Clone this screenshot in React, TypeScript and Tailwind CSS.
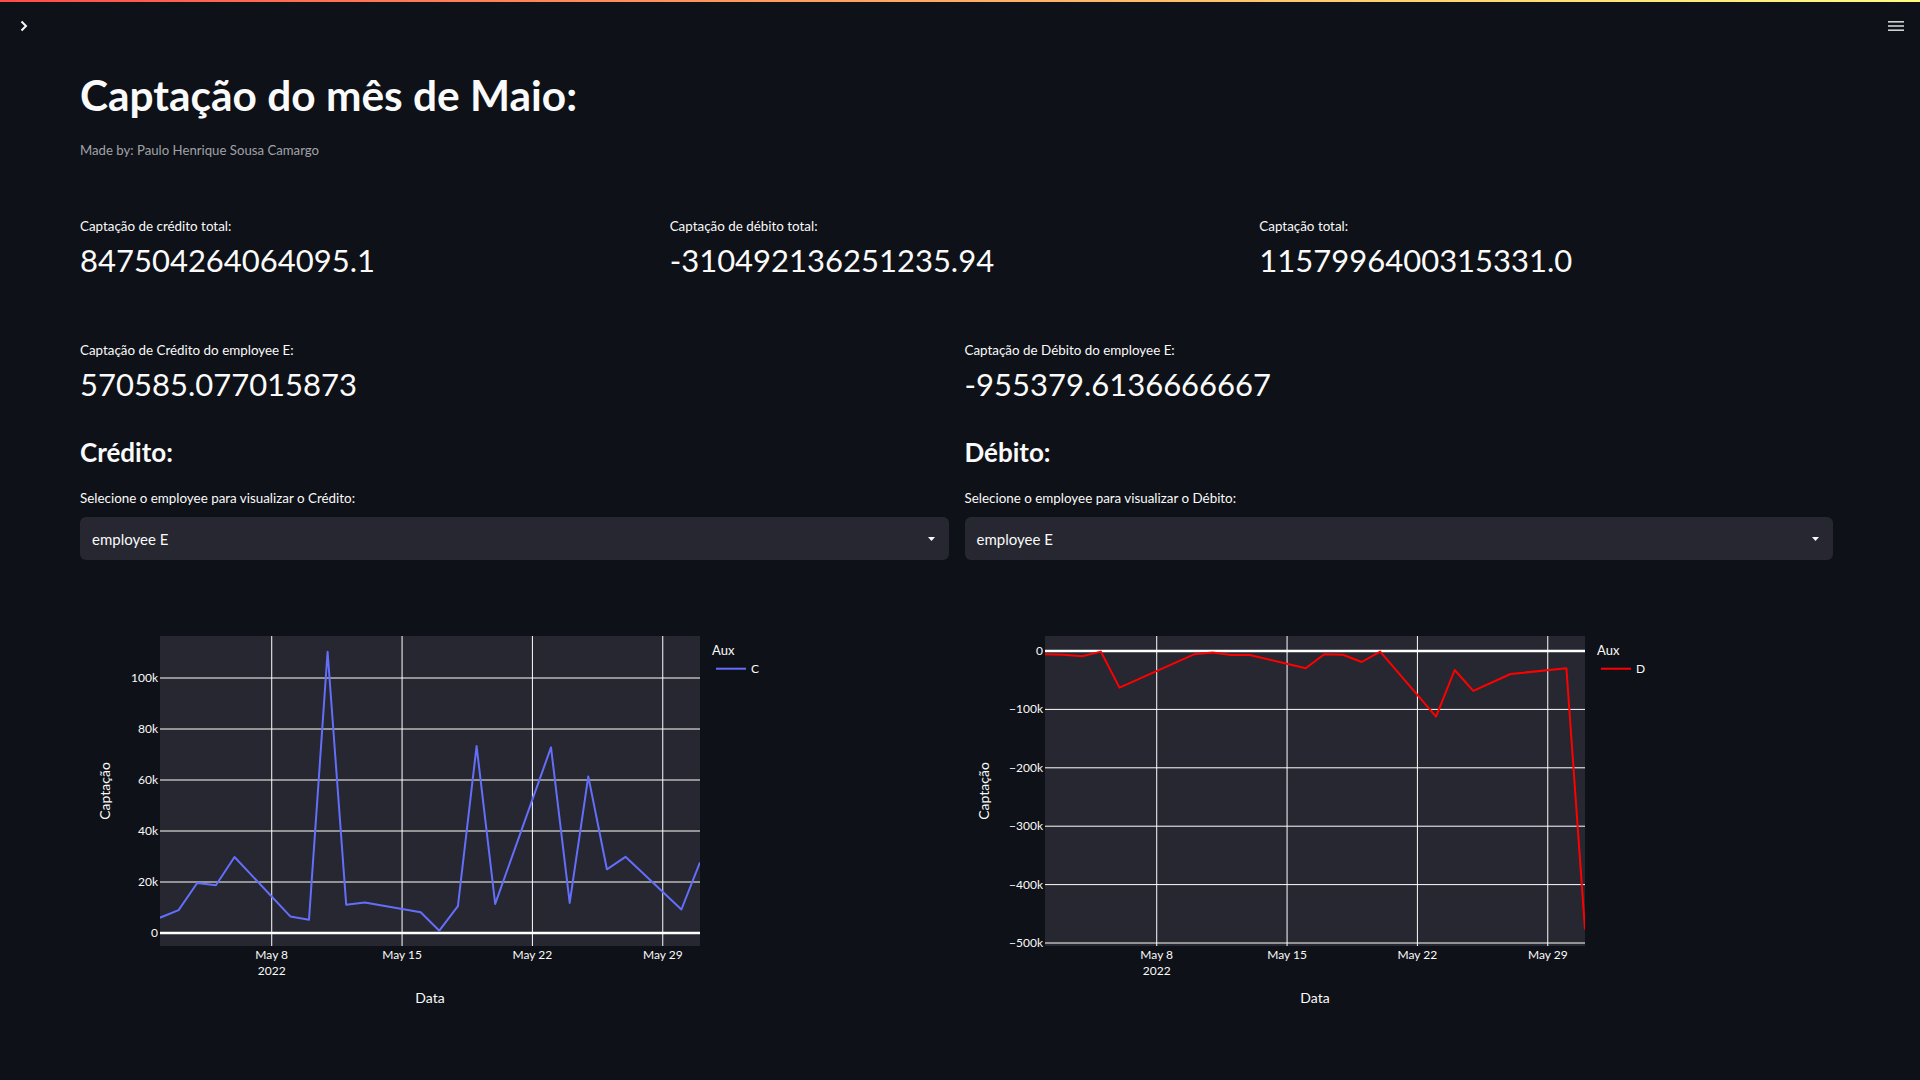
import React from "react";

type Pt = [number, number];

const credit: Pt[] = [
  [0, 6000], [1, 9000], [2, 19600], [3, 18700], [4, 29800], [7, 6500], [8, 5200],
  [9, 110300], [10, 11100], [11, 12000], [14, 8100], [15, 900], [16, 10500],
  [17, 73300], [18, 11400], [21, 72800], [22, 11800], [23, 61400], [24, 25000],
  [25, 29900], [28, 9200], [29, 27700],
];

const debit: Pt[] = [
  [0, -5700], [1, -6300], [2, -9100], [3, -1100], [4, -62700], [8, -5700],
  [9, -2800], [10, -6800], [11, -6800], [14, -29600], [15, -5700], [16, -6300],
  [17, -18800], [18, -1100], [21, -112300], [22, -32500], [23, -68400],
  [25, -39300], [28, -29600], [29, -477000],
];

const dayX = (d: number) => 80 + (d * 540) / 29;

type ChartProps = {
  id: string;
  data: Pt[];
  ticks: { v: number; label: string }[];
  yOf: (v: number) => number;
  color: string;
  name: string;
  titleX: number;
};

function Chart({ id, data, ticks, yOf, color, name, titleX }: ChartProps) {
  const xTicks = [
    { d: 6, label: "May 8" },
    { d: 13, label: "May 15" },
    { d: 20, label: "May 22" },
    { d: 27, label: "May 29" },
  ];
  const points = data.map(([d, v]) => `${dayX(d).toFixed(1)},${yOf(v).toFixed(1)}`).join(" ");
  return (
    <svg width="700" height="450" viewBox="0 0 700 450" className="block">
      <defs>
        <clipPath id={id}>
          <rect x="80" y="60" width="540" height="310" />
        </clipPath>
      </defs>
      <rect x="80" y="60" width="540" height="310" fill="#262730" />
      {xTicks.map((t) => (
        <line key={t.d} x1={dayX(t.d)} x2={dayX(t.d)} y1="60" y2="370" stroke="#ffffff" strokeWidth="1" />
      ))}
      {ticks.map((t) => (
        <line
          key={t.v}
          x1="80"
          x2="620"
          y1={yOf(t.v)}
          y2={yOf(t.v)}
          stroke="#ffffff"
          strokeWidth={t.v === 0 ? 2.5 : 1}
        />
      ))}
      <polyline
        points={points}
        fill="none"
        stroke={color}
        strokeWidth="2"
        strokeLinejoin="round"
        clipPath={`url(#${id})`}
      />
      {ticks.map((t) => (
        <text
          key={`l${t.v}`}
          x="78"
          y={yOf(t.v) + 4}
          textAnchor="end"
          fontSize="12"
          fill="#fafafa"
        >
          {t.label}
        </text>
      ))}
      {xTicks.map((t) => (
        <text key={`x${t.d}`} x={dayX(t.d)} y="383" textAnchor="middle" fontSize="12" fill="#fafafa">
          {t.label}
        </text>
      ))}
      <text x={dayX(6)} y="399" textAnchor="middle" fontSize="12" fill="#fafafa">
        2022
      </text>
      <text x="350" y="427" textAnchor="middle" fontSize="14" fill="#fafafa">
        Data
      </text>
      <text
        x="0"
        y="0"
        transform={`translate(${titleX} 215) rotate(-90)`}
        textAnchor="middle"
        fontSize="14"
        fill="#fafafa"
      >
        Captação
      </text>
      <text x="632" y="79" fontSize="13" fill="#fafafa">
        Aux
      </text>
      <line x1="636" x2="666" y1="92.7" y2="92.7" stroke={color} strokeWidth="2" />
      <text x="671" y="97" fontSize="12" fill="#fafafa">
        {name}
      </text>
    </svg>
  );
}

function Metric({ label, value }: { label: string; value: string }) {
  return (
    <div className="flex flex-col">
      <div className="text-[13.4px] leading-[20px] text-[#fafafa]">{label}</div>
      <div className="mt-[4px] text-[31px] leading-[40px] text-[#fafafa]">{value}</div>
    </div>
  );
}

function Select({ label }: { label: string }) {
  return (
    <div className="flex flex-col">
      <div className="text-[13.4px] leading-[20px] text-[#fafafa]">{label}</div>
      <div className="mt-[9px] flex h-[43px] items-center justify-between rounded-[6px] bg-[#262730] pl-[12px] pr-[14px]">
        <span className="text-[15px] leading-[20px] text-[#fafafa]">employee E</span>
        <svg width="7" height="4" viewBox="0 0 7 4">
          <polygon points="0,0 7,0 3.5,4" fill="#fafafa" />
        </svg>
      </div>
    </div>
  );
}

export default function App() {
  const leftTicks = [0, 20000, 40000, 60000, 80000, 100000].map((v) => ({
    v,
    label: v === 0 ? "0" : `${v / 1000}k`,
  }));
  const rightTicks = [0, -100000, -200000, -300000, -400000, -500000].map((v) => ({
    v,
    label: v === 0 ? "0" : `\u2212${-v / 1000}k`,
  }));
  return (
    <div className="min-h-screen bg-[#0e1117] font-['Lato',sans-serif] text-[#fafafa]">
      <div className="h-[2px] bg-gradient-to-r from-[#ff4b4b] to-[#fffd80]" />
      <div className="flex h-[48px] items-center justify-between pl-[16px] pr-[16px]">
        <svg width="16" height="16" viewBox="0 0 16 16">
          <polyline points="5.5,3.5 10,8 5.5,12.5" fill="none" stroke="#fafafa" strokeWidth="2" />
        </svg>
        <svg width="16" height="12" viewBox="0 0 16 12">
          <rect x="0" y="1" width="16" height="1.6" fill="#d0d1d4" />
          <rect x="0" y="5.2" width="16" height="1.6" fill="#d0d1d4" />
          <rect x="0" y="9.4" width="16" height="1.6" fill="#d0d1d4" />
        </svg>
      </div>
      <div className="pl-[80px] pr-[87px]">
        <h1 className="mt-[20px] text-[42.4px] font-bold leading-[50px]">Captação do mês de Maio:</h1>
        <div className="mt-[20px] text-[13.2px] leading-[20px] text-[#a0a2a8]">
          Made by: Paulo Henrique Sousa Camargo
        </div>
        <div className="mt-[56px] grid grid-cols-3 gap-[16px]">
          <Metric label="Captação de crédito total:" value="847504264064095.1" />
          <Metric label="Captação de débito total:" value="-310492136251235.94" />
          <Metric label="Captação total:" value="1157996400315331.0" />
        </div>
        <div className="mt-[60px] grid grid-cols-2 gap-[16px]">
          <div className="flex flex-col">
            <Metric label="Captação de Crédito do employee E:" value="570585.077015873" />
            <h3 className="mt-[32px] text-[26px] font-bold leading-[32px]">Crédito:</h3>
            <div className="mt-[20px]">
              <Select label="Selecione o employee para visualizar o Crédito:" />
            </div>
            <div className="mt-[16px]">
              <Chart
                id="clipC"
                data={credit}
                ticks={leftTicks}
                yOf={(v) => 357 - v * 0.00255}
                color="#636efa"
                name="C"
                titleX={30}
              />
            </div>
          </div>
          <div className="flex flex-col">
            <Metric label="Captação de Débito do employee E:" value="-955379.6136666667" />
            <h3 className="mt-[32px] text-[26px] font-bold leading-[32px]">Débito:</h3>
            <div className="mt-[20px]">
              <Select label="Selecione o employee para visualizar o Débito:" />
            </div>
            <div className="mt-[16px]">
              <Chart
                id="clipD"
                data={debit}
                ticks={rightTicks}
                yOf={(v) => 75 - v * 0.000584}
                color="#ff0000"
                name="D"
                titleX={24}
              />
            </div>
          </div>
        </div>
      </div>
    </div>
  );
}
